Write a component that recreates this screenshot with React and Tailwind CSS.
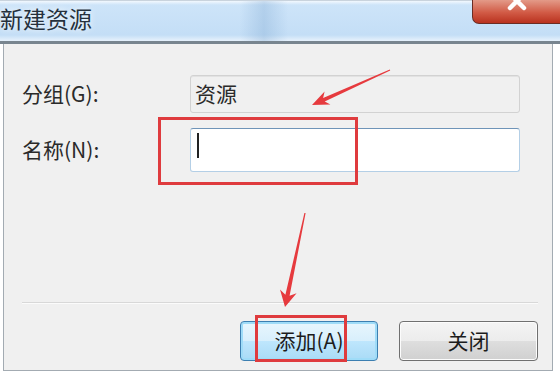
import React from "react";

const Marks = () => (
  <svg className="absolute inset-0 pointer-events-none" width="560" height="372" viewBox="0 0 560 372">
    <polygon
      points="312,105 324.6,91.6 323.1,97.9 389.8,69.5 390.2,70.5 324.7,101.5 330.4,104.4"
      fill="#e63a3e"
    />
    <polygon
      points="285,307 296.6,293.2 289.6,295.8 305.6,213.1 304.4,212.9 285.4,294.8 280,289.6"
      fill="#e63a3e"
    />
  </svg>
);

const App = () => {
  return (
    <div
      className="relative w-[560px] h-[372px] overflow-hidden bg-white"
      style={{ fontFamily: '"Noto Sans CJK SC", "Noto Sans", sans-serif' }}
    >
      {/* title bar */}
      <div className="h-[41px] border-t border-[#c9d3dd] flex justify-between items-start bg-[linear-gradient(to_right,transparent_240px,rgba(110,155,200,0.28)_264px,transparent_288px),linear-gradient(to_bottom,#f2f8fe_0px,#cde4f9_4px,#c4def6_34px,#e2effb_39px)]">
        <div className="h-[34px] flex items-center text-[23px] leading-none text-[#26313d] [text-shadow:0_0_6px_#ffffff]">
          新建资源
        </div>
        <div className="w-[88px] h-[24px] -mt-px rounded-bl-[7px] border border-[#6b2d24] border-t-0 border-r-0 flex justify-center overflow-hidden bg-[linear-gradient(to_bottom,#e39a88,#d15a45_55%,#b9321f)]">
          <svg width="22" height="22" viewBox="0 0 22 22" className="-mt-[10px]">
            <path d="M4 4 L18 18 M18 4 L4 18" stroke="#ffffff" strokeWidth="4.5" strokeLinecap="round" />
          </svg>
        </div>
      </div>
      <div className="h-[3px] bg-[#78858f]" />

      {/* body */}
      <div className="flex h-[328px]">
        <div className="w-[3px]" />
        <div className="w-[550px] h-[327px] bg-[#f0f0f0] border-l border-r border-b border-[#a3abb2] pl-[18px] pr-[14px] flex flex-col">
          <div className="mt-[31px] flex items-center">
            <div className="w-[168px] text-[21px] text-[#2a2a2a]">分组(G):</div>
            <div className="w-[330px] h-[38px] rounded-[3px] border border-[#d2d2d2] bg-[#f0f0f0] shadow-[inset_0_1px_0_#e2e2e2] flex items-center pl-[4px] text-[21px] text-[#2a2a2a]">
              资源
            </div>
          </div>
          <div className="mt-[15px] flex items-center">
            <div className="w-[168px] text-[21px] text-[#2a2a2a]">名称(N):</div>
            <div className="w-[330px] h-[44px] rounded-[3px] border border-[#b4cfe6] border-t-[#6f94b8] bg-white pl-[6px] pt-[4px]">
              <div className="w-[2px] h-[25px] bg-[#222222]" />
            </div>
          </div>

          <div className="mt-[130px] h-px bg-[#d8d8d8]" />
          <div className="h-px bg-[#fbfbfb]" />

          <div className="mt-[17px] flex justify-end gap-[21px]">
            <div className="w-[138px] h-[40px] rounded-[4px] border border-[#3c7fb1] shadow-[inset_0_0_0_2px_#9fdcf8] bg-[linear-gradient(to_bottom,#e8f6fd,#d8effc_50%,#bee6fd_51%,#a9dbf6)] flex items-center justify-center text-[21px] text-[#1c1c1c]">
              添加(A)
            </div>
            <div className="w-[139px] h-[40px] rounded-[4px] border border-[#707070] shadow-[inset_0_0_0_1px_#fcfcfc] bg-[linear-gradient(to_bottom,#f4f4f4,#ececec_50%,#dedede_51%,#d0d0d0)] flex items-center justify-center text-[21px] text-[#1c1c1c]">
              关闭
            </div>
          </div>
        </div>
      </div>

      {/* annotations */}
      <div className="absolute left-[158px] top-[117px] w-[200px] h-[68px] border-[3px] border-[#df3b3e]" />
      <div className="absolute left-[255px] top-[315px] w-[92px] h-[47px] border-[3px] border-[#df3b3e]" />
      <Marks />
    </div>
  );
};

export default App;
